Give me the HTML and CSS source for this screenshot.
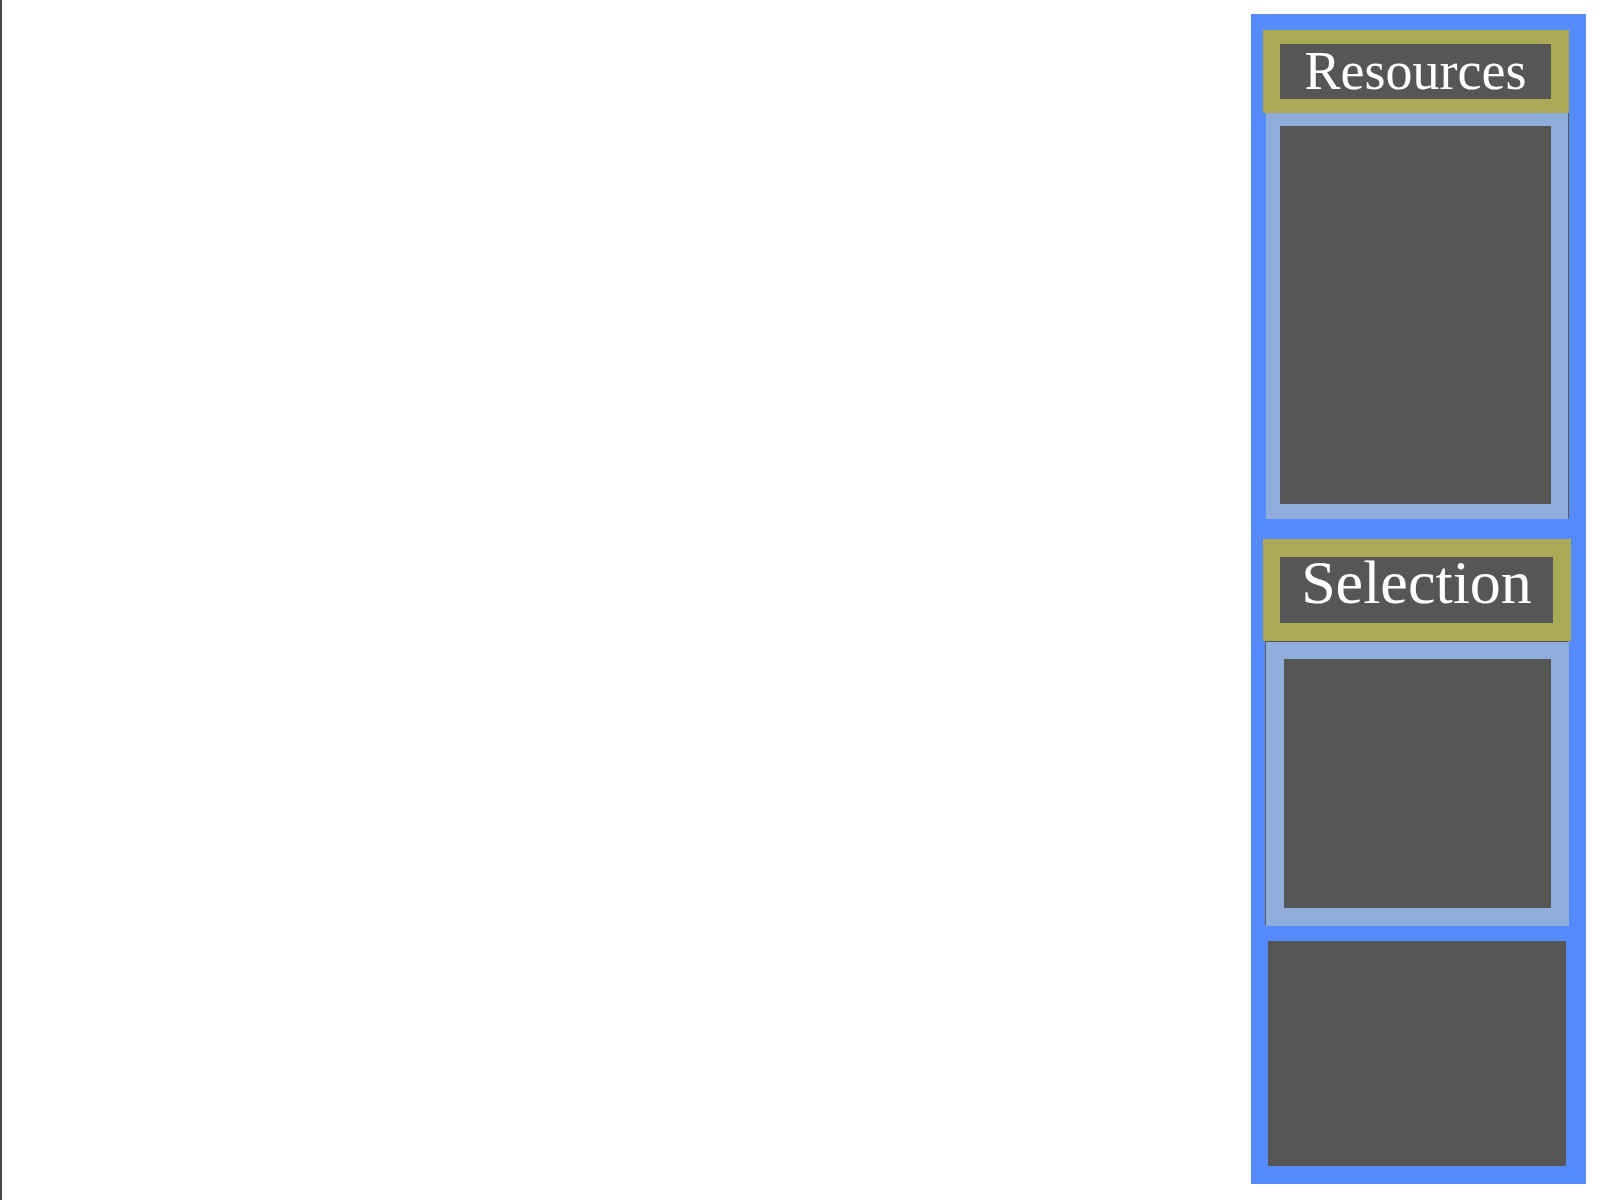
FILE: index.html
```html
<!DOCTYPE html>
<html lang="en">
<head>
  <meta charset="utf-8">
  <title>Resources and Selection</title>
  <link rel="stylesheet" href="styles.css">
</head>
<body>
  <div class="screen">
    <main class="viewport"></main>
    <aside class="sidebar">
      <h2 class="heading heading-resources">Resources</h2>
      <section class="panel panel-resources" aria-label="Resources"></section>
      <h2 class="heading heading-selection">Selection</h2>
      <section class="panel panel-selection" aria-label="Selection"></section>
      <section class="minimap" aria-label="Overview"></section>
    </aside>
  </div>
</body>
</html>
```

FILE: styles.css
```css
* {
  box-sizing: border-box;
}

body {
  margin: 0;
  background: #fff;
}

.screen {
  display: flex;
  min-height: 100vh;
  padding: 14px 14px 16px 0;
  border-left: 2px solid #484848;
}

.viewport {
  flex: 1;
}

.sidebar {
  display: flex;
  flex-direction: column;
  width: 335px;
  padding: 16px 15px 18px 12px;
  background: #568aff;
}

.heading {
  position: relative;
  z-index: 1;
  margin: 0;
  border: solid #aaaa56;
  background: #565656;
  color: #fff;
  font-family: "Liberation Serif", "Times New Roman", serif;
  font-weight: 400;
  text-align: center;
}

.heading-resources {
  height: 83px;
  margin-right: 2px;
  border-width: 14px 18px 14px 17px;
  font-size: 54px;
  line-height: 54px;
}

.heading-selection {
  height: 102px;
  margin-top: 20px;
  border-width: 18px 18px 18px 17px;
  font-size: 62px;
  line-height: 50px;
}

.panel {
  border: solid #90aedc;
  background: #565656;
}

.panel-resources {
  flex: 378 1 0;
  margin: 0 3px;
  border-width: 13px 17px 15px 14px;
  box-shadow: 1px -1px 0 #565656;
}

.panel-selection {
  flex: 249 1 0;
  margin: 1px 2px 0 3px;
  border-width: 17px 18px 18px;
  box-shadow: -1px -1px 0 #565656;
}

.minimap {
  flex: 225 1 0;
  margin: 15px 5px 0;
  background: #565656;
}
```
